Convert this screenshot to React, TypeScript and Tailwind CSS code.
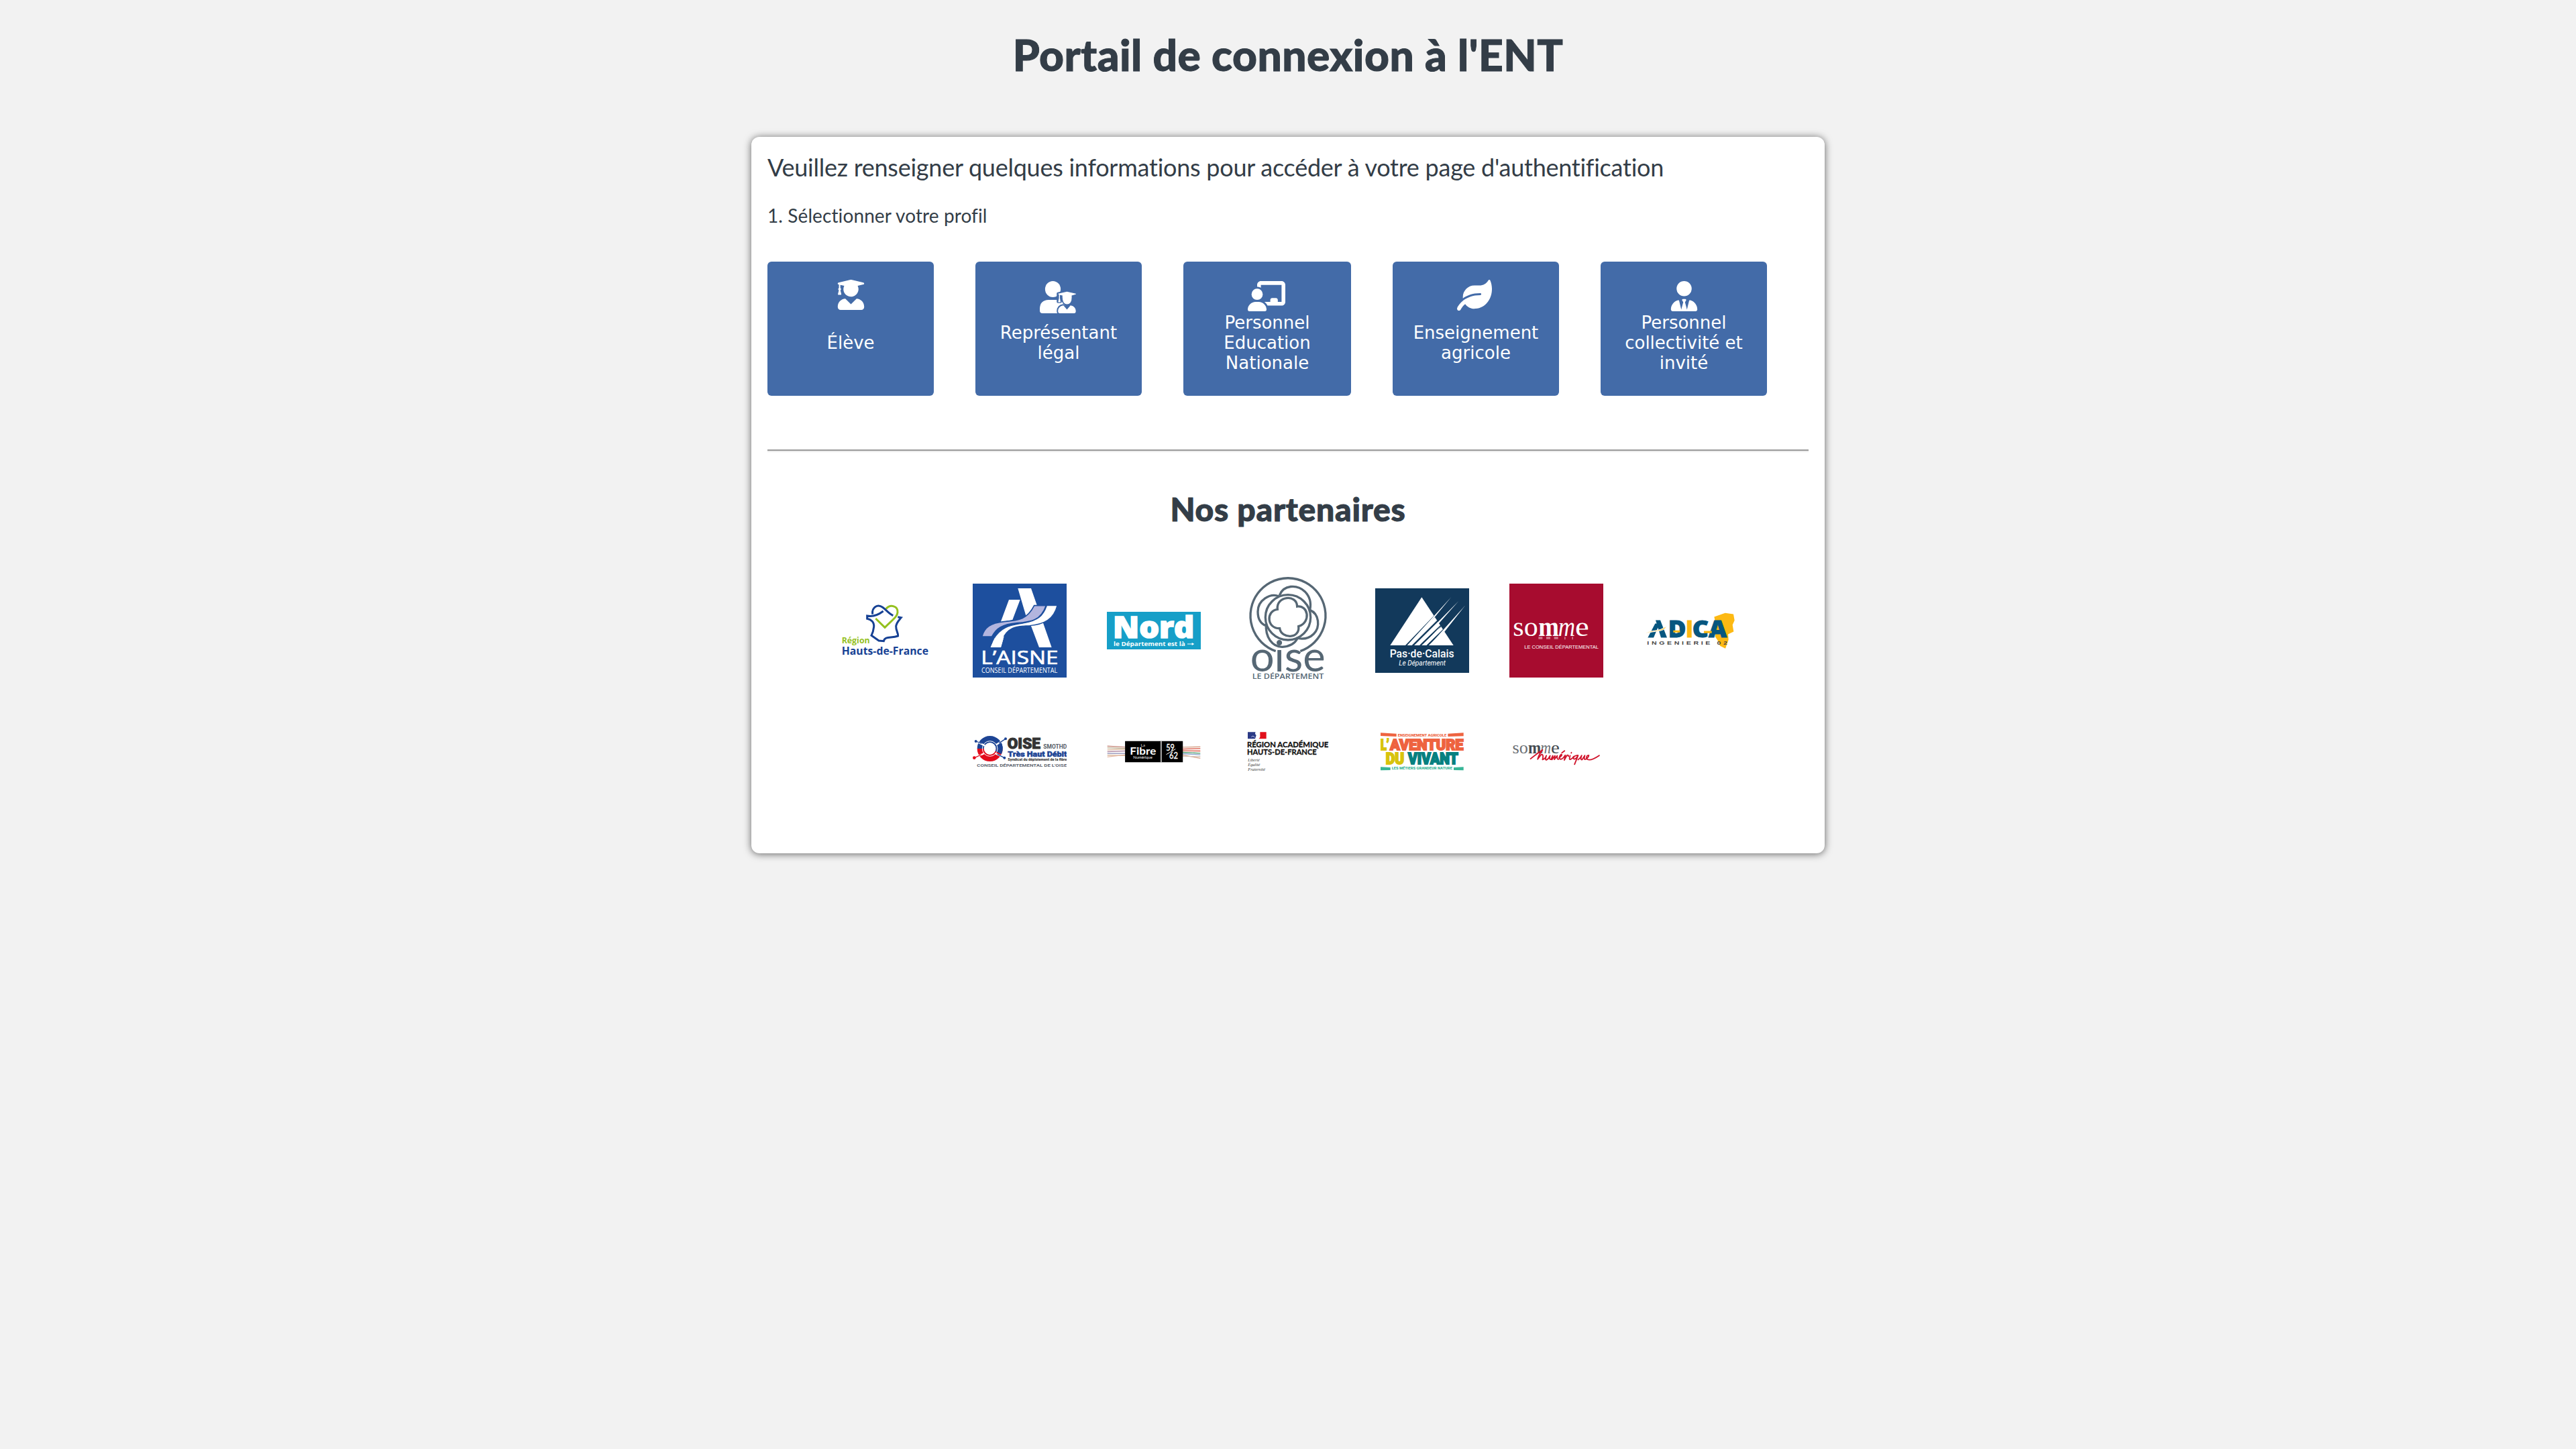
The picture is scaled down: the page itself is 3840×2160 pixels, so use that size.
import type { ReactNode } from "react";
import { FaUserGraduate, FaLeaf } from "react-icons/fa";
import { FaChalkboardUser, FaUserTie } from "react-icons/fa6";

type LabelProps = {
  x: number;
  y: number;
  size: number;
  w: number;
  fill: string;
  font?: string;
  weight?: number;
  italic?: boolean;
  children: string;
};

function Label({ x, y, size, w, fill, font = "Lato", weight = 400, italic, children }: LabelProps) {
  return (
    <text
      x={x}
      y={y}
      fontSize={size}
      textLength={w}
      lengthAdjust="spacingAndGlyphs"
      fill={fill}
      fontFamily={`"${font}", sans-serif`}
      fontWeight={weight}
      fontStyle={italic ? "italic" : "normal"}
    >
      {children}
    </text>
  );
}

function ParentIcon() {
  return (
    <svg viewBox="0 0 54 48" className="h-12 w-[54px]" fill="currentColor">
      <ellipse cx="19.5" cy="12" rx="11.6" ry="12" />
      <path d="M13 28H26C33 28 38 33 38 40V48H4Q0 48 0 44V41C0 33 5 28 13 28Z" />
      <g fill="#436ba8" stroke="#436ba8" strokeWidth="3.5" strokeLinejoin="round">
        <path d="M27 18.5 40.5 15.5 54 18.5V20L47 22V27C47 31 44 34.500 40.500 34.500S34 31 34 27V22L31 21.500V31H27Z" />
        <path d="M35 36 40.500 43 46 36C51 36.500 54 40 54 44.500Q54 48 51 48H30Q27 48 27 44.500C27 40 30 36.500 35 36Z" />
      </g>
      <path d="M27.500 18.700 40.500 15.800 53.700 18.700Q54.200 19.400 53.500 19.800L47.500 21.500Q48.500 34 40.500 34.500 33 34 33.800 21.500L30 20.700V25.500L31 31.500H27.300L28.600 25.500V20L27.500 19.600Z" />
      <path d="M35.200 36.300 40.500 42.500 45.800 36.300C51 37 53.700 40.500 53.700 45Q53.700 48 51 48H30Q27.200 48 27.200 45C27.200 40.500 30 37 35.200 36.300Z" />
    </svg>
  );
}

const profiles: { label: string; icon: ReactNode; iconBox: string; width: string }[] = [
  {
    label: "Élève",
    icon: <FaUserGraduate className="size-[45px]" />,
    iconBox: "pt-[27px]",
    width: "w-[248px]",
  },
  { label: "Représentant légal", icon: <ParentIcon />, iconBox: "pt-[29px] pr-[3px]", width: "w-[248px]" },
  {
    label: "Personnel Education Nationale",
    icon: <FaChalkboardUser className="h-[45px] w-14" />,
    iconBox: "pt-[29px] pr-0.5",
    width: "w-[250px]",
  },
  {
    label: "Enseignement agricole",
    icon: <FaLeaf className="size-[52px]" />,
    iconBox: "pt-6 pr-1",
    width: "w-[248px]",
  },
  {
    label: "Personnel collectivité et invité",
    icon: <FaUserTie className="size-[45px]" />,
    iconBox: "pt-[29px]",
    width: "w-[248px]",
  },
];

function HautsDeFrance() {
  return (
    <svg viewBox="60 150 420 300" className="h-[100px] w-[140px]" fill="none" strokeWidth="9">
      <path d="M272 203C292 180 327 190 324 219C322 240 300 252 267 286L226 246" stroke="#95c11f" />
      <path d="M212 227C208 195 235 180 257 196C275 209 285 224 304 233" stroke="#164194" />
      <path
        d="M260 213C240 228 215 240 188 234V247C205 250 220 262 218 283C216 300 212 312 207 322L240 345L262 347C268 324 295 335 326 324C328 312 316 300 317 280C320 262 332 252 340 242L325 239"
        stroke="#164194"
      />
      <Label x={74} y={358} size={38} w={126} fill="#95c11f" weight={700} font="Open Sans">Région</Label>
      <Label x={74} y={407} size={46} w={388} fill="#164194" weight={700} font="Open Sans">Hauts-de-France</Label>
    </svg>
  );
}

function Aisne() {
  return (
    <svg viewBox="660 90 420 420" className="size-[140px]">
      <path fill="#1d4f9e" d="M660 90h420v420H660z" />
      <path fill="#fff" d="M822 162H872L838 252L785 262ZM862 111H921L1013 375H957L922 282L900 240ZM830 290L808 300L786 375H740L757 335Q775 305 830 290Z" />
      <path
        d="M701 327C712 285 740 266 800 260C870 254 905 248 935 188H988C965 255 920 262 860 266C790 272 765 290 746 327Z"
        fill="#b3b5de"
        stroke="#1d4f9e"
        strokeWidth="5"
      />
      <path
        d="M752 340C790 275 840 276 890 266C950 255 975 235 991 188H1038C1022 250 980 272 915 278C850 280 815 285 790 345Z"
        fill="#fff"
        stroke="#1d4f9e"
        strokeWidth="4"
      />
      <path d="M757 335 740 375H786L800 325Z" fill="#fff" />
      <g stroke="#fff" strokeWidth="2">
        <Label x={697} y={450} size={83} w={346} fill="#fff" font="Open Sans">L’AISNE</Label>
      </g>
      <Label x={699} y={489} size={33} w={340} fill="#fff" font="Open Sans">CONSEIL DÉPARTEMENTAL</Label>
    </svg>
  );
}

function Nord() {
  return (
    <svg viewBox="60 216 420 168" className="h-14 w-[140px]">
      <path fill="#169fc8" d="M60 216h420v168H60z" />
      <g stroke="#fff" strokeWidth="5">
        <Label x={87} y={334} size={132} w={364} fill="#fff" font="Open Sans" weight={800}>Nord</Label>
      </g>
      <Label x={90} y={368} size={25} w={320} fill="#fff" font="Open Sans" weight={700}>le Département est là</Label>
      <path d="M420 360h24" stroke="#fff" strokeWidth="3" />
      <path d="m440 354 11 6-11 6z" fill="#fff" />
    </svg>
  );
}

function Oise() {
  return (
    <svg viewBox="660 60 420 480" className="h-40 w-[140px]" fill="none" stroke="#566774" strokeWidth="10">
      <path d="M815 392A168 168 0 1 1 925 392" />
      <circle cx="870" cy="241" r="101" />
      <path d="M832 142C850 95 910 92 945 125C970 150 974 180 968 208" />
      <path d="M830 147C790 130 735 165 735 215C735 250 750 270 772 278" />
      <path d="M772 270C768 330 800 374 845 373C880 370 902 355 912 335" />
      <path d="M968 208C1010 225 1015 285 985 315C965 335 935 340 905 333" />
      <path d="M823 205C815 145 910 135 911 192C960 185 975 262 917 281C925 338 840 338 833 290C775 292 770 212 823 205Z" />
      <g stroke="none">
        <Label x={701} y={482} size={190} w={336} fill="#566774" font="Lato">oise</Label>
        <Label x={710} y={517} size={33} w={320} fill="#566774" font="Open Sans" weight={600}>LE DÉPARTEMENT</Label>
      </g>
    </svg>
  );
}

function PasDeCalais() {
  return (
    <svg viewBox="60 108 420 378" className="h-[126px] w-[140px]">
      <path fill="#12395b" d="M60 108h420v378H60z" />
      <path fill="#fff" d="M268 148 410 363H127Z" />
      <g stroke="#12395b" strokeWidth="7">
        <path d="M196 367 326 232M225 367 343 250M258 367 368 262M290 367 392 268" />
      </g>
      <g fill="#fff">
        <path d="M203 363 400 147 222 363ZM238 363 433 165 258 363ZM270 363 355 275 288 363ZM302 363 462 185 322 363Z" />
      </g>
      <Label x={125} y={416} size={49} w={288} fill="#fff" font="Roboto" weight={500}>Pas·de·Calais</Label>
      <Label x={166} y={453} size={32} w={209} fill="#fff" font="Roboto" italic>Le Département</Label>
    </svg>
  );
}

function SommeWord({ dark, light }: { dark: string; light: string }) {
  return (
    <>
      <Label x={676} y={323} size={122} w={112} fill={light} font="Liberation Serif">so</Label>
      <Label x={790} y={323} size={122} w={92} fill={dark} font="Liberation Serif" weight={700}>m</Label>
      <Label x={878} y={323} size={122} w={76} fill={light} font="Liberation Serif" italic>m</Label>
      <Label x={954} y={323} size={122} w={62} fill={dark} font="Liberation Serif">e</Label>
    </>
  );
}

function Somme() {
  return (
    <svg viewBox="660 90 420 420" className="size-[140px]">
      <path fill="#a70c2f" d="M660 90h420v420H660z" />
      <SommeWord dark="#fff" light="#fff" />
      <g fill="#fff" opacity=".45">
        <path d="M790 328h18v10h-18zM825 328h18v10h-18zM860 328h18v10h-18zM906 328h5v12h-5zM940 328h5v12h-5z" />
      </g>
      <Label x={727} y={381} size={24} w={332} fill="#fff" font="Liberation Sans">LE CONSEIL DÉPARTEMENTAL</Label>
    </svg>
  );
}

function Adica() {
  return (
    <svg viewBox="210 210 420 170" className="h-[57px] w-[140px]">
      <path fill="#fdb913" d="M526 232 575 215 612 220 617 248 608 268 613 298 588 310 590 335 576 374 552 362 543 340 530 320 536 280Z" />
      <path fill="#07567f" d="M262 262H282L255 325H229ZM264 247H285L315 325H288Z" />
      <path d="M219 308C245 285 275 305 314 272C300 305 260 290 219 308Z" fill="#fdb913" stroke="#fff" strokeWidth="3" />
      <g stroke="#07567f" strokeWidth="3">
        <Label x={320} y={324} size={107} w={80} fill="#07567f" font="Open Sans" weight={800}>D</Label>
        <Label x={428} y={324} size={107} w={154} fill="#07567f" font="Open Sans" weight={800}>CA</Label>
      </g>
      <path fill="#fdb913" d="M404 247h21v78h-21zM343 293h30v9h-30zM480 295h35v10h-35z" />
      <g letterSpacing="8">
        <Label x={226} y={357} size={23} w={370} fill="#444" font="Liberation Sans" weight={700}>INGENIERIE 02</Label>
      </g>
    </svg>
  );
}

function OiseTresHautDebit() {
  return (
    <svg viewBox="60 72 420 150" className="h-[50px] w-[140px]">
      <g fill="none" strokeWidth="30">
        <path d="M95 135A42 42 0 0 1 179 135" stroke="#1d4494" />
        <path d="M179 135A42 42 0 0 1 95 135" stroke="#e30b1c" />
        <path d="M171 110A42 42 0 0 1 175 153" stroke="#1d4494" />
      </g>
      <circle cx="137" cy="135" r="34" fill="none" stroke="#fff" strokeWidth="3" />
      <path d="M75 102 115 122M68 176 112 156M207 91 165 118M200 175 160 156" stroke="#fff" strokeWidth="7" />
      <path d="M75 102 100 112M207 91 178 110M200 175 170 160" stroke="#1d4494" strokeWidth="4" />
      <path d="M68 176 98 162" stroke="#e30b1c" strokeWidth="4" />
      <g fill="#1d4494">
        <circle cx="74" cy="102" r="6" />
        <circle cx="207" cy="91" r="6" />
        <circle cx="202" cy="176" r="6" />
      </g>
      <circle cx="67" cy="176" r="7" fill="#e30b1c" />
      <g strokeWidth="3">
        <g stroke="#333">
          <Label x={215} y={135} size={65} w={148} fill="#333" font="Roboto" weight={900}>OISE</Label>
        </g>
        <g stroke="#1d4494" strokeWidth="1.5">
          <Label x={217} y={170} size={34} w={264} fill="#1d4494" font="Roboto" weight={900}>Très Haut Débit</Label>
        </g>
      </g>
      <Label x={376} y={136} size={25} w={105} fill="#555c66" font="Roboto" weight={700}>SMOTHD</Label>
      <Label x={217} y={188} size={15} w={264} fill="#333" font="Roboto" weight={900}>Syndicat du déploiement de la fibre</Label>
      <Label x={79} y={216} size={17} w={402} fill="#5d6470" font="Roboto" weight={700}>CONSEIL DÉPARTEMENTAL DE L'OISE</Label>
    </svg>
  );
}

function FibreNumerique() {
  return (
    <svg viewBox="660 100 420 100" className="h-[33px] w-[140px]">
      <g fill="none" strokeWidth="4">
        <path d="M660 125 740 129" stroke="#c98d80" />
        <path d="M660 133 740 135" stroke="#b9aa8a" />
        <path d="M660 142 740 139M660 166 740 168" stroke="#dbb79a" />
        <path d="M660 150 740 147" stroke="#b58fa8" />
        <path d="M660 158 740 158" stroke="#8e8fb5" />
        <path d="M660 174 740 164" stroke="#e5b9a5" />
        <path d="M1000 130 1080 128M1000 165 1080 180" stroke="#d8a58c" />
        <path d="M1000 138 1080 136M1000 146 1080 147" stroke="#d9533f" />
        <path d="M1000 153 1080 157" stroke="#4f9a6c" />
        <path d="M1000 159 1080 164" stroke="#8aa3cd" />
        <path d="M1000 171 1080 172" stroke="#d7c5ba" />
      </g>
      <path d="M740 102h261v96H740z" />
      <path d="M901 102h4v96h-4z" fill="#fff" />
      <Label x={811} y={127} size={16} w={20} fill="#ddd">La</Label>
      <Label x={762} y={164} size={48} w={118} fill="#fff" weight={700}>Fibre</Label>
      <Label x={777} y={181} size={17} w={86} fill="#fff">Numérique</Label>
      <g stroke="#fff">
        <Label x={925} y={146} size={39} w={38} fill="#fff">59</Label>
        <Label x={940} y={182} size={39} w={39} fill="#fff">62</Label>
      </g>
      <path d="M926 163 968 138" stroke="#fff" strokeWidth="3" />
    </svg>
  );
}

function RegionAcademique() {
  return (
    <svg viewBox="60 50 420 195" className="h-[65px] w-[140px]">
      <path fill="#2b3a86" d="M90 60h35q-5 8 3 14l-5 16H90z" />
      <path fill="#e1101b" d="M145 60h28v30h-34q8-5 6-15z" />
      <path d="M106 82q8-9 15 2" stroke="#c8cdec" strokeWidth="3" fill="none" />
      <g stroke="#111" strokeWidth="1">
        <Label x={87} y={129} size={35} w={364} fill="#111" font="Lato" weight={700}>RÉGION ACADÉMIQUE</Label>
        <Label x={87} y={162} size={35} w={311} fill="#111" font="Lato" weight={700}>HAUTS-DE-FRANCE</Label>
      </g>
      <Label x={91} y={191} size={20} w={52} fill="#333" font="Liberation Serif" italic>Liberté</Label>
      <Label x={91} y={212} size={20} w={54} fill="#333" font="Liberation Serif" italic>Égalité</Label>
      <Label x={91} y={233} size={20} w={77} fill="#333" font="Liberation Serif" italic>Fraternité</Label>
    </svg>
  );
}

function AventureDuVivant() {
  return (
    <svg viewBox="660 50 420 195" className="h-[65px] w-[140px]">
      <path fill="#ee6340" d="M684 63 755 67V80L684 77ZM985 67 1055 63V78L985 80Z" />
      <path fill="#37b596" d="M684 216 728 218V230L684 231ZM1011 218 1055 216V231L1011 230Z" />
      <Label x={761} y={80} size={18} w={218} fill="#ee6340" font="Roboto" weight={900}>ENSEIGNEMENT AGRICOLE</Label>
      <g strokeWidth="6">
        <g stroke="#d8c30c">
          <Label x={684} y={140} size={68} w={38} fill="#d8c30c" font="Roboto" weight={900}>L’</Label>
          <Label x={707} y={202} size={69} w={82} fill="#d8c30c" font="Roboto" weight={900}>DU</Label>
        </g>
        <g stroke="#ee6340">
          <Label x={726} y={140} size={68} w={328} fill="#ee6340" font="Roboto" weight={900}>AVENTURE</Label>
        </g>
        <g stroke="#078080">
          <Label x={807} y={202} size={69} w={224} fill="#078080" font="Roboto" weight={900}>VIVANT</Label>
        </g>
      </g>
      <Label x={734} y={227} size={18} w={271} fill="#37b596" font="Roboto" weight={900}>LES MÉTIERS GRANDEUR NATURE</Label>
    </svg>
  );
}

function SommeNumerique() {
  return (
    <svg viewBox="90 70 420 160" className="h-[53px] w-[140px]">
      <g transform="translate(-321 -45) scale(.626)">
        <SommeWord dark="#444a50" light="#6b7075" />
      </g>
      <g fill="none" stroke="#d0142c" strokeWidth="5.500" strokeLinecap="round" strokeLinejoin="round">
        <path d="M184 182Q212 160 238 142Q220 165 216 184L232 163Q244 160 238 186Q250 182 255 168Q248 188 256 187Q266 182 272 168Q266 186 276 185L284 168L280 186L294 168L291 185L304 168Q302 186 310 184" />
        <path d="M312 178Q330 165 322 162Q310 172 316 183Q326 188 340 166M325 155 337 146M340 166 336 188 348 166Q356 164 354 171M362 168Q356 186 363 185Q372 182 378 172M367 156 368 154M396 166Q376 168 377 181Q384 190 398 167L382 207M398 186Q410 178 414 167Q406 188 416 186L428 167Q422 188 432 184Q446 176 446 166Q434 166 436 182Q450 196 493 167" />
      </g>
    </svg>
  );
}

const partners: { name: string; logo: ReactNode }[][] = [
  [
    { name: "Région Hauts-de-France", logo: <HautsDeFrance /> },
    { name: "L'Aisne", logo: <Aisne /> },
    { name: "Nord", logo: <Nord /> },
    { name: "Oise", logo: <Oise /> },
    { name: "Pas-de-Calais", logo: <PasDeCalais /> },
    { name: "Somme", logo: <Somme /> },
    { name: "Adica", logo: <Adica /> },
  ],
  [
    { name: "Oise Très Haut Débit", logo: <OiseTresHautDebit /> },
    { name: "La Fibre Numérique 59 62", logo: <FibreNumerique /> },
    { name: "Région académique", logo: <RegionAcademique /> },
    { name: "L'Aventure du Vivant", logo: <AventureDuVivant /> },
    { name: "Somme Numérique", logo: <SommeNumerique /> },
  ],
];

export default function App() {
  return (
    <div className="min-h-screen bg-[#f2f2f2] pt-[43px] font-['Lato',sans-serif] text-[#333d47]">
      <h1 className="text-center text-[64px] leading-[77px] font-black tracking-[0.5px] [-webkit-text-stroke:1px_#333d47]">
        Portail de connexion à l'ENT
      </h1>
      <main className="mx-auto mt-21 h-[1068px] w-[1600px] rounded-xl bg-white px-6 pt-6 shadow-[0_1px_12px_rgba(0,0,0,0.6)]">
        <p className="text-[36px] leading-[43px] tracking-[-0.25px]">
          Veuillez renseigner quelques informations pour accéder à votre page d'authentification
        </p>
        <p className="mt-[33px] text-[28px] leading-[34px] tracking-[0.1px]">1. Sélectionner votre profil</p>
        <div className="mt-[52px] flex gap-[62px]">
          {profiles.map((p) => (
            <button key={p.label} className={`grid h-[200px] rounded-md bg-[#436ba8] text-white ${p.width}`}>
              <span className={`col-start-1 row-start-1 flex items-start justify-center self-start ${p.iconBox}`}>
                {p.icon}
              </span>
              <span className="col-start-1 row-start-1 self-center px-6 pt-[42px] text-center font-['DejaVu_Sans',sans-serif] text-[26px] leading-[30px]">
                {p.label}
              </span>
            </button>
          ))}
        </div>
        <div className="mt-20 h-1 border-t-2 border-b-2 border-t-[#9a9a9a] border-b-[#eeeeee]" />
        <h2 className="mt-14 text-center text-[48px] leading-[58px] font-black tracking-[0.8px] [-webkit-text-stroke:1px_#333d47]">
          Nos partenaires
        </h2>
        {partners.map((row, i) => (
          <div
            key={i}
            className={
              i === 0
                ? "mt-[72px] flex h-40 items-center justify-center gap-[60px]"
                : "mt-[60px] flex h-20 items-center justify-center gap-[60px]"
            }
          >
            {row.map((p) => (
              <div key={p.name} aria-label={p.name}>
                {p.logo}
              </div>
            ))}
          </div>
        ))}
      </main>
    </div>
  );
}
